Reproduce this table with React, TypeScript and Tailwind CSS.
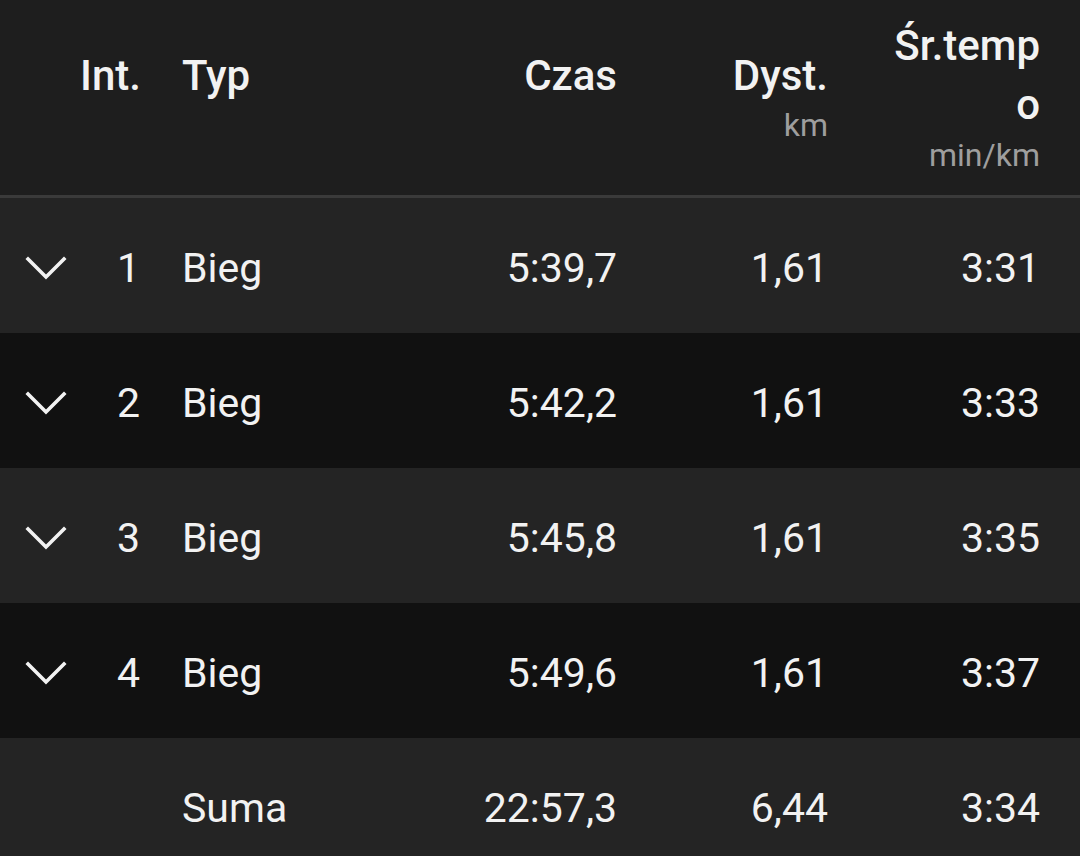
const LAPS = [
    { n: 1, type: 'Bieg', time: '5:39,7', dist: '1,61', pace: '3:31' },
    { n: 2, type: 'Bieg', time: '5:42,2', dist: '1,61', pace: '3:33' },
    { n: 3, type: 'Bieg', time: '5:45,8', dist: '1,61', pace: '3:35' },
    { n: 4, type: 'Bieg', time: '5:49,6', dist: '1,61', pace: '3:37' },
];

function Chevron() {
    return (
        <svg width="42" height="26" viewBox="0 0 42 26" fill="none" aria-hidden="true">
            <path d="M3 4 L21 22 L39 4" stroke="#f2f2f2" strokeWidth="3.6" strokeLinecap="square" />
        </svg>
    );
}

export default function App() {
    return (
        <div className="w-[1080px] h-[856px] overflow-hidden bg-[#1e1e1e] text-[#f2f2f2] font-['Roboto',sans-serif] text-[41px]">
            {/* ── Header ── */}
            <div className="flex items-center h-[191px] pb-[4px] text-[42px] font-medium border-b-[3px] border-[#3a3a3a] box-content">
                <div className="w-[80px] shrink-0" />
                <div className="w-[60px] shrink-0 text-right">
                    <div className="leading-[59px] whitespace-nowrap">Int.</div>
                    <div className="h-[40px]" />
                </div>
                <div className="ml-[42px] w-[200px] shrink-0">
                    <div className="leading-[59px]">Typ</div>
                    <div className="h-[40px]" />
                </div>
                <div className="w-[235px] shrink-0 text-right">
                    <div className="leading-[59px]">Czas</div>
                    <div className="h-[40px]" />
                </div>
                <div className="w-[211px] shrink-0 text-right">
                    <div className="leading-[59px]">Dyst.</div>
                    <div className="text-[32px] leading-[40px] font-normal text-[#9e9e9e]">km</div>
                </div>
                <div className="w-[212px] shrink-0 text-right">
                    <div className="leading-[59px] whitespace-nowrap">Śr.temp<br />o</div>
                    <div className="text-[32px] leading-[42px] font-normal text-[#9e9e9e]">min/km</div>
                </div>
            </div>

            {/* ── Laps ── */}
            {LAPS.map((lap, i) => (
                <div
                    key={lap.n}
                    className={`flex items-center h-[135px] pt-[6px] ${i % 2 === 0 ? 'bg-[#242424]' : 'bg-[#111111]'}`}
                >
                    <div className="w-[80px] shrink-0 flex justify-center pl-[12px] -mt-[2px]">
                        <Chevron />
                    </div>
                    <div className="w-[60px] shrink-0 text-right">{lap.n}</div>
                    <div className="ml-[42px] w-[200px] shrink-0">{lap.type}</div>
                    <div className="w-[235px] shrink-0 text-right">{lap.time}</div>
                    <div className="w-[211px] shrink-0 text-right">{lap.dist}</div>
                    <div className="w-[212px] shrink-0 text-right">{lap.pace}</div>
                </div>
            ))}

            {/* ── Total ── */}
            <div className="flex items-center h-[135px] bg-[#242424] pt-[6px]">
                <div className="w-[140px] shrink-0" />
                <div className="ml-[42px] w-[200px] shrink-0">Suma</div>
                <div className="w-[235px] shrink-0 text-right">22:57,3</div>
                <div className="w-[211px] shrink-0 text-right">6,44</div>
                <div className="w-[212px] shrink-0 text-right">3:34</div>
            </div>
        </div>
    );
}
